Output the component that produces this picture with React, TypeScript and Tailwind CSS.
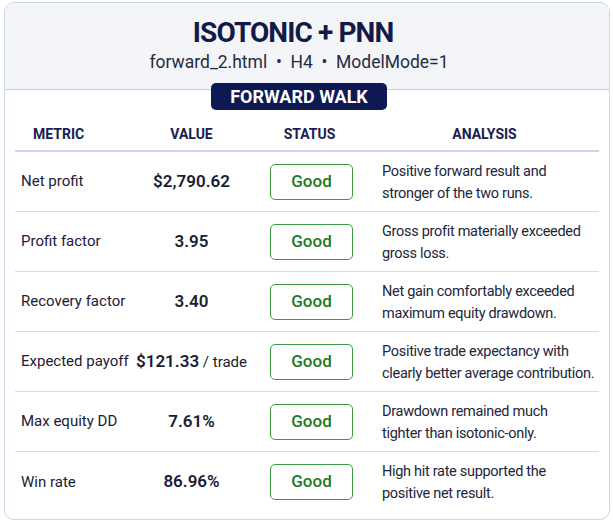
const rows = [
    { metric: 'Net profit', value: '$2,790.62', unit: '', analysis: ['Positive forward result and', 'stronger of the two runs.'] },
    { metric: 'Profit factor', value: '3.95', unit: '', analysis: ['Gross profit materially exceeded', 'gross loss.'] },
    { metric: 'Recovery factor', value: '3.40', unit: '', analysis: ['Net gain comfortably exceeded', 'maximum equity drawdown.'] },
    { metric: 'Expected payoff', value: '$121.33', unit: ' / trade', analysis: ['Positive trade expectancy with', 'clearly better average contribution.'] },
    { metric: 'Max equity DD', value: '7.61%', unit: '', analysis: ['Drawdown remained much', 'tighter than isotonic-only.'] },
    { metric: 'Win rate', value: '86.96%', unit: '', analysis: ['High hit rate supported the', 'positive net result.'] },
];

export default function App() {
    return (
        <div className="w-[613px] h-[525px] bg-white pl-[4px] pt-[2px] [font-family:Roboto,'Liberation_Sans',sans-serif]">
            <div className="w-[606px] h-[518px] border border-[#cdd6e6] rounded-[10px] overflow-hidden bg-white">
                <div className="h-[87px] bg-[#f3f5f9] border-b border-[#c3cee2] flex flex-col items-center pr-[16px]">
                    <div className="mt-[13px] mr-[12px] text-[28px] leading-[34px] font-bold text-[#141a47] tracking-[-0.9px]">
                        ISOTONIC + PNN
                    </div>
                    <div className="mt-[1px] text-[17.5px] leading-[22px] text-[#262b42] whitespace-pre">
                        {'forward_2.html  •  H4  •  ModelMode=1'}
                    </div>
                </div>
                <div className="flex justify-center pr-[16px]">
                    <div className="-mt-[7px] w-[176px] h-[27px] rounded-[5px] bg-[#0e1852] text-white text-[18px] font-bold leading-[27px] text-center">
                        FORWARD WALK
                    </div>
                </div>
                <div className="mx-[10px]">
                    <div className="grid grid-cols-[115px_123px_117px_1fr] h-[42px] pt-[9px] items-center border-b-2 border-[#cdd6e8] text-[14px] font-bold text-[#1a2050]">
                        <div className="pl-[18px]">METRIC</div>
                        <div className="text-center">VALUE</div>
                        <div className="text-center pr-[4px]">STATUS</div>
                        <div className="text-center">ANALYSIS</div>
                    </div>
                    {rows.map((r, i) => (
                        <div
                            key={r.metric}
                            className={`grid grid-cols-[115px_123px_117px_1fr] h-[60px] items-center ${i < rows.length - 1 ? 'border-b border-[#d6dded]' : ''}`}
                        >
                            <div className="pl-[6px] text-[15px] text-[#1c2036] whitespace-nowrap">{r.metric}</div>
                            <div className="text-center text-[17px] font-semibold text-[#1a1d33] whitespace-nowrap">
                                {r.value}
                                {r.unit && <span className="font-normal text-[15px]">{r.unit}</span>}
                            </div>
                            <div className="flex justify-center">
                                <div className="w-[83px] h-[36px] rounded-[5px] border border-[#3d9a40] flex items-center justify-center text-[17px] font-medium text-[#1d7a23]">
                                    Good
                                </div>
                            </div>
                            <div className="pl-[12px] pt-[2px] text-[14.5px] leading-[22px] tracking-[-0.3px] text-[#22263b] whitespace-nowrap">
                                <div>{r.analysis[0]}</div>
                                <div>{r.analysis[1]}</div>
                            </div>
                        </div>
                    ))}
                </div>
            </div>
        </div>
    );
}
